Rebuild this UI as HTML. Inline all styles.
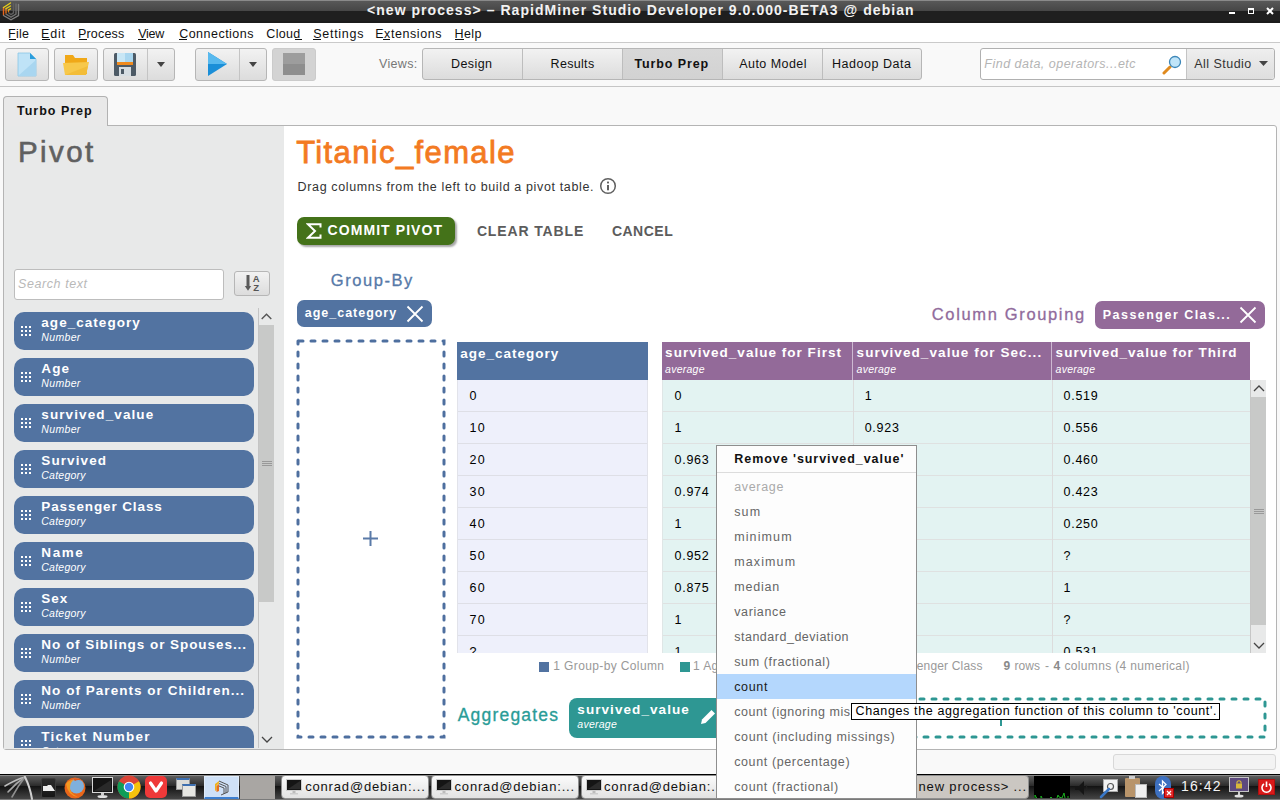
<!DOCTYPE html>
<html><head><meta charset="utf-8"><title>RapidMiner Turbo Prep</title>
<style>
*{margin:0;padding:0;box-sizing:border-box}
html,body{width:1280px;height:800px;overflow:hidden}
body{position:relative;background:#f9f9f9;font-family:"Liberation Sans",sans-serif;font-size:12px;color:#000}
.a{position:absolute}
.x{position:absolute;white-space:pre}
.clip{position:absolute;overflow:hidden}
#tb{left:0;top:0;width:1280px;height:23px;background:linear-gradient(#8a8a8a 0,#8a8a8a 1px,#585858 1px,#464646 11px,#1f1f1f 11px,#1f1f1f 21px,#1b1b1b 21px)}
#menu{left:0;top:23px;width:1280px;height:20px;background:#fff;border-bottom:1px solid #cacaca}
.ul{position:absolute;height:1px;background:#111;top:39px}
#tline{left:0;top:86px;width:1280px;height:1px;background:#c6c6c6}
.btn{position:absolute;border:1px solid #b6b6b6;border-radius:3px;background:linear-gradient(#f2f2f2,#dcdcdc)}
.vsep{position:absolute;width:1px;background:#c4c4c4}
#views{left:422px;top:48px;width:500px;height:32px}
#tab{left:3px;top:96px;width:105px;height:31px;background:#e9e9e9;border:1px solid #b2b2b2;border-bottom:none;border-radius:4px 4px 0 0}
#panel{left:3px;top:125px;width:1274px;height:625px;border:1px solid #b4b4b4;background:#fff;border-radius:0 3px 3px 3px}
#lp{left:4px;top:126px;width:280px;height:623px;background:#e8e9e9}
.card{position:absolute;left:14px;width:240px;height:38px;border-radius:10px;background:#5273a1}
.dots{position:absolute;left:7px;top:14px;width:10px;height:10px}
.chip{position:absolute;border-radius:7px}
.thumb{position:absolute;background:#c8c9c8}
.tr{position:absolute;height:1px}

</style></head><body>
<!-- title bar -->
<div id="tb" class="a">
 <svg class="a" style="left:0;top:0" width="24" height="23" viewBox="0 0 24 23">
  <g fill="none" stroke-width="1.4" stroke-linecap="round">
   <path d="M3.5,15.5 L11,19.8 L18.5,15.5 L18.5,4.5" stroke="#808080"/>
   <path d="M6,14.2 L11,17.2 L16,14.2 L16,4" stroke="#6e6e6e"/>
   <path d="M8.5,12.8 L11,14.6 L13.5,12.8 L13.5,3.5" stroke="#5e5e5e"/>
   <path d="M3.5,14.5 L3.5,7.5" stroke="#e8641a"/>
   <path d="M6,13 L6,8.7" stroke="#e0701c"/>
   <path d="M8.5,11.5 L8.5,10" stroke="#e07a1c"/>
   <path d="M3.5,7.5 L10.5,3" stroke="#e6cf1a"/>
   <path d="M6,8.7 L10.5,6" stroke="#e0c818"/>
   <path d="M8.5,10 L10.5,8.8" stroke="#d8c018"/>
  </g>
 </svg>
 <div class="a" style="left:1229px;top:12px;width:6px;height:2px;background:#fff"></div>
 <div class="a" style="left:1248px;top:8px;width:6px;height:6px;border:1px solid #fff;border-top-width:2px"></div>
 <svg class="a" style="left:1266px;top:7px" width="8" height="8"><path d="M1,1 L7,7 M7,1 L1,7" stroke="#fff" stroke-width="2"/></svg>
</div>
<!-- menu -->
<div id="menu" class="a"></div>
<div class="ul" style="left:9px;width:7px"></div>
<div class="ul" style="left:42px;width:8px"></div>
<div class="ul" style="left:79px;width:8px"></div>
<div class="ul" style="left:138px;width:8px"></div>
<div class="ul" style="left:179px;width:8px"></div>
<div class="ul" style="left:295px;width:7px"></div>
<div class="ul" style="left:313px;width:8px"></div>
<div class="ul" style="left:383px;width:7px"></div>
<div class="ul" style="left:455px;width:9px"></div>
<!-- toolbar -->
<div id="tline" class="a"></div>
<div class="btn" style="left:5px;top:48px;width:44px;height:33px"></div>
<svg class="a" style="left:17px;top:52px" width="20" height="25" viewBox="0 0 20 25">
 <path d="M1,1 L13,1 L19,7 L19,24 L1,24 Z" fill="#bfe3f7" stroke="#8cc6e6" stroke-width="0.8"/>
 <path d="M1,24 L19,8 L19,24 Z" fill="#a9d6f0"/>
 <path d="M13,1 L19,7 L13,7 Z" fill="#2b9ddc"/>
</svg>
<div class="btn" style="left:54px;top:48px;width:44px;height:33px"></div>
<svg class="a" style="left:63px;top:54px" width="26" height="22" viewBox="0 0 26 22">
 <path d="M2,1 L10,1 L12,4 L24,4 L24,20 L2,20 Z" fill="#f0a818"/>
 <path d="M0,9 L26,8 L23,21 L2,21 Z" fill="#f7c84a"/>
 <path d="M2,21 L25,12 L23,21 Z" fill="#f3bd38"/>
</svg>
<div class="btn" style="left:103px;top:48px;width:72px;height:33px"></div>
<div class="vsep" style="left:147px;top:49px;height:31px"></div>
<svg class="a" style="left:114px;top:53px" width="22" height="23" viewBox="0 0 22 23">
 <rect x="0" y="0" width="22" height="23" rx="1.5" fill="#4d5a66"/>
 <rect x="3" y="0" width="16" height="9" fill="#c8e6f5"/>
 <rect x="11" y="0" width="8" height="9" fill="#a9d6ef"/>
 <rect x="3" y="9" width="16" height="3" fill="#ef8a1e"/>
 <rect x="5" y="14" width="12" height="9" fill="#d6dde2"/>
 <rect x="7" y="16" width="3" height="5" fill="#4d5a66"/>
</svg>
<svg class="a" style="left:157px;top:62px" width="8" height="5"><path d="M0,0 L8,0 L4,5 Z" fill="#444"/></svg>
<div class="btn" style="left:195px;top:48px;width:72px;height:33px"></div>
<div class="vsep" style="left:239px;top:49px;height:31px"></div>
<svg class="a" style="left:207px;top:52px" width="21" height="24" viewBox="0 0 21 24">
 <path d="M1,0 L20,12 L1,24 Z" fill="#1b8fd8"/>
 <path d="M1,0 L20,12 L1,12 Z" fill="#58b9ee"/>
</svg>
<svg class="a" style="left:249px;top:62px" width="8" height="5"><path d="M0,0 L8,0 L4,5 Z" fill="#444"/></svg>
<div class="a" style="left:272px;top:48px;width:44px;height:33px;border-radius:3px;background:#d3d3d3;border:1px solid #cbcbcb"></div>
<div class="a" style="left:283px;top:53px;width:22px;height:22px;background:linear-gradient(#9d9d9d 50%,#8e8e8e 50%)"></div>
<!-- views -->
<div class="btn" id="views"></div>
<div class="a" style="left:622px;top:49px;width:100px;height:30px;background:linear-gradient(#d8d8d8,#d2d2d2)"></div>
<div class="vsep" style="left:522px;top:49px;height:30px;background:#bdbdbd"></div>
<div class="vsep" style="left:622px;top:49px;height:30px;background:#bdbdbd"></div>
<div class="vsep" style="left:722px;top:49px;height:30px;background:#bdbdbd"></div>
<div class="vsep" style="left:822px;top:49px;height:30px;background:#bdbdbd"></div>
<!-- search -->
<div class="a" style="left:980px;top:48px;width:295px;height:32px;border:1px solid #b0b0b0;border-radius:3px;background:#fff"></div>
<div class="a" style="left:1186px;top:49px;width:88px;height:30px;background:linear-gradient(#eeeeee,#dedede);border-left:1px solid #c4c4c4;border-radius:0 3px 3px 0"></div>
<svg class="a" style="left:1162px;top:55px" width="20" height="20" viewBox="0 0 20 20">
 <path d="M2,18 L8,12" stroke="#e08a1e" stroke-width="3" stroke-linecap="round"/>
 <circle cx="13" cy="7" r="5.5" fill="#bfe4f8" stroke="#3d87b8" stroke-width="1.3"/>
</svg>
<svg class="a" style="left:1259px;top:61px" width="9" height="5"><path d="M0,0 L9,0 L4.5,5 Z" fill="#444"/></svg>
<!-- tab & panel -->
<div id="panel" class="a"></div>
<div id="tab" class="a"></div>
<div id="lp" class="a"></div>
<!-- left panel -->
<div class="a" style="left:14px;top:269px;width:210px;height:31px;border:1px solid #bdbdbd;border-radius:3px;background:#fff"></div>
<div class="btn" style="left:234px;top:271px;width:36px;height:25px"></div>
<svg class="a" style="left:243px;top:274px" width="18" height="19" viewBox="0 0 18 19">
 <path d="M5,1 L5,13" stroke="#5a5a5a" stroke-width="3"/>
 <path d="M1.8,12 L8.2,12 L5,16.8 Z" fill="#5a5a5a"/>
 <text x="13.2" y="8.3" font-family="Liberation Sans" font-weight="bold" font-size="9.5" text-anchor="middle" fill="#555">A</text>
 <text x="13.2" y="16.6" font-family="Liberation Sans" font-weight="bold" font-size="9.5" text-anchor="middle" fill="#555">Z</text>
</svg>
<div class="clip" style="left:0;top:305px;width:258px;height:443px">
 <div class="card" style="top:7px"><svg class="dots" width="10" height="10"><rect x="0" y="0" width="2" height="2" fill="#fff"/><rect x="0" y="4" width="2" height="2" fill="#fff"/><rect x="0" y="8" width="2" height="2" fill="#fff"/><rect x="4" y="0" width="2" height="2" fill="#fff"/><rect x="4" y="4" width="2" height="2" fill="#fff"/><rect x="4" y="8" width="2" height="2" fill="#fff"/><rect x="8" y="0" width="2" height="2" fill="#fff"/><rect x="8" y="4" width="2" height="2" fill="#fff"/><rect x="8" y="8" width="2" height="2" fill="#fff"/></svg></div><div class="card" style="top:53px"><svg class="dots" width="10" height="10"><rect x="0" y="0" width="2" height="2" fill="#fff"/><rect x="0" y="4" width="2" height="2" fill="#fff"/><rect x="0" y="8" width="2" height="2" fill="#fff"/><rect x="4" y="0" width="2" height="2" fill="#fff"/><rect x="4" y="4" width="2" height="2" fill="#fff"/><rect x="4" y="8" width="2" height="2" fill="#fff"/><rect x="8" y="0" width="2" height="2" fill="#fff"/><rect x="8" y="4" width="2" height="2" fill="#fff"/><rect x="8" y="8" width="2" height="2" fill="#fff"/></svg></div><div class="card" style="top:99px"><svg class="dots" width="10" height="10"><rect x="0" y="0" width="2" height="2" fill="#fff"/><rect x="0" y="4" width="2" height="2" fill="#fff"/><rect x="0" y="8" width="2" height="2" fill="#fff"/><rect x="4" y="0" width="2" height="2" fill="#fff"/><rect x="4" y="4" width="2" height="2" fill="#fff"/><rect x="4" y="8" width="2" height="2" fill="#fff"/><rect x="8" y="0" width="2" height="2" fill="#fff"/><rect x="8" y="4" width="2" height="2" fill="#fff"/><rect x="8" y="8" width="2" height="2" fill="#fff"/></svg></div><div class="card" style="top:145px"><svg class="dots" width="10" height="10"><rect x="0" y="0" width="2" height="2" fill="#fff"/><rect x="0" y="4" width="2" height="2" fill="#fff"/><rect x="0" y="8" width="2" height="2" fill="#fff"/><rect x="4" y="0" width="2" height="2" fill="#fff"/><rect x="4" y="4" width="2" height="2" fill="#fff"/><rect x="4" y="8" width="2" height="2" fill="#fff"/><rect x="8" y="0" width="2" height="2" fill="#fff"/><rect x="8" y="4" width="2" height="2" fill="#fff"/><rect x="8" y="8" width="2" height="2" fill="#fff"/></svg></div><div class="card" style="top:191px"><svg class="dots" width="10" height="10"><rect x="0" y="0" width="2" height="2" fill="#fff"/><rect x="0" y="4" width="2" height="2" fill="#fff"/><rect x="0" y="8" width="2" height="2" fill="#fff"/><rect x="4" y="0" width="2" height="2" fill="#fff"/><rect x="4" y="4" width="2" height="2" fill="#fff"/><rect x="4" y="8" width="2" height="2" fill="#fff"/><rect x="8" y="0" width="2" height="2" fill="#fff"/><rect x="8" y="4" width="2" height="2" fill="#fff"/><rect x="8" y="8" width="2" height="2" fill="#fff"/></svg></div><div class="card" style="top:237px"><svg class="dots" width="10" height="10"><rect x="0" y="0" width="2" height="2" fill="#fff"/><rect x="0" y="4" width="2" height="2" fill="#fff"/><rect x="0" y="8" width="2" height="2" fill="#fff"/><rect x="4" y="0" width="2" height="2" fill="#fff"/><rect x="4" y="4" width="2" height="2" fill="#fff"/><rect x="4" y="8" width="2" height="2" fill="#fff"/><rect x="8" y="0" width="2" height="2" fill="#fff"/><rect x="8" y="4" width="2" height="2" fill="#fff"/><rect x="8" y="8" width="2" height="2" fill="#fff"/></svg></div><div class="card" style="top:283px"><svg class="dots" width="10" height="10"><rect x="0" y="0" width="2" height="2" fill="#fff"/><rect x="0" y="4" width="2" height="2" fill="#fff"/><rect x="0" y="8" width="2" height="2" fill="#fff"/><rect x="4" y="0" width="2" height="2" fill="#fff"/><rect x="4" y="4" width="2" height="2" fill="#fff"/><rect x="4" y="8" width="2" height="2" fill="#fff"/><rect x="8" y="0" width="2" height="2" fill="#fff"/><rect x="8" y="4" width="2" height="2" fill="#fff"/><rect x="8" y="8" width="2" height="2" fill="#fff"/></svg></div><div class="card" style="top:329px"><svg class="dots" width="10" height="10"><rect x="0" y="0" width="2" height="2" fill="#fff"/><rect x="0" y="4" width="2" height="2" fill="#fff"/><rect x="0" y="8" width="2" height="2" fill="#fff"/><rect x="4" y="0" width="2" height="2" fill="#fff"/><rect x="4" y="4" width="2" height="2" fill="#fff"/><rect x="4" y="8" width="2" height="2" fill="#fff"/><rect x="8" y="0" width="2" height="2" fill="#fff"/><rect x="8" y="4" width="2" height="2" fill="#fff"/><rect x="8" y="8" width="2" height="2" fill="#fff"/></svg></div><div class="card" style="top:375px"><svg class="dots" width="10" height="10"><rect x="0" y="0" width="2" height="2" fill="#fff"/><rect x="0" y="4" width="2" height="2" fill="#fff"/><rect x="0" y="8" width="2" height="2" fill="#fff"/><rect x="4" y="0" width="2" height="2" fill="#fff"/><rect x="4" y="4" width="2" height="2" fill="#fff"/><rect x="4" y="8" width="2" height="2" fill="#fff"/><rect x="8" y="0" width="2" height="2" fill="#fff"/><rect x="8" y="4" width="2" height="2" fill="#fff"/><rect x="8" y="8" width="2" height="2" fill="#fff"/></svg></div><div class="card" style="top:421px"><svg class="dots" width="10" height="10"><rect x="0" y="0" width="2" height="2" fill="#fff"/><rect x="0" y="4" width="2" height="2" fill="#fff"/><rect x="0" y="8" width="2" height="2" fill="#fff"/><rect x="4" y="0" width="2" height="2" fill="#fff"/><rect x="4" y="4" width="2" height="2" fill="#fff"/><rect x="4" y="8" width="2" height="2" fill="#fff"/><rect x="8" y="0" width="2" height="2" fill="#fff"/><rect x="8" y="4" width="2" height="2" fill="#fff"/><rect x="8" y="8" width="2" height="2" fill="#fff"/></svg></div>
 <div class="x" style="left:41.30px;top:11.00px;font-size:13.5px;line-height:13.5px;color:#fff;font-weight:bold;letter-spacing:1.042px;">age_category</div>
<div class="x" style="left:41.30px;top:27.00px;font-size:10.5px;line-height:10.5px;color:#fff;font-style:italic;letter-spacing:0.330px;">Number</div>
<div class="x" style="left:41.30px;top:57.00px;font-size:13.5px;line-height:13.5px;color:#fff;font-weight:bold;letter-spacing:1.127px;">Age</div>
<div class="x" style="left:41.30px;top:73.00px;font-size:10.5px;line-height:10.5px;color:#fff;font-style:italic;letter-spacing:0.330px;">Number</div>
<div class="x" style="left:41.30px;top:103.00px;font-size:13.5px;line-height:13.5px;color:#fff;font-weight:bold;letter-spacing:1.104px;">survived_value</div>
<div class="x" style="left:41.30px;top:119.00px;font-size:10.5px;line-height:10.5px;color:#fff;font-style:italic;letter-spacing:0.330px;">Number</div>
<div class="x" style="left:41.30px;top:149.00px;font-size:13.5px;line-height:13.5px;color:#fff;font-weight:bold;letter-spacing:1.103px;">Survived</div>
<div class="x" style="left:41.30px;top:165.00px;font-size:10.5px;line-height:10.5px;color:#fff;font-style:italic;letter-spacing:0.235px;">Category</div>
<div class="x" style="left:41.30px;top:195.00px;font-size:13.5px;line-height:13.5px;color:#fff;font-weight:bold;letter-spacing:0.889px;">Passenger Class</div>
<div class="x" style="left:41.30px;top:211.00px;font-size:10.5px;line-height:10.5px;color:#fff;font-style:italic;letter-spacing:0.235px;">Category</div>
<div class="x" style="left:41.30px;top:241.00px;font-size:13.5px;line-height:13.5px;color:#fff;font-weight:bold;letter-spacing:1.580px;">Name</div>
<div class="x" style="left:41.30px;top:257.00px;font-size:10.5px;line-height:10.5px;color:#fff;font-style:italic;letter-spacing:0.235px;">Category</div>
<div class="x" style="left:41.30px;top:287.00px;font-size:13.5px;line-height:13.5px;color:#fff;font-weight:bold;letter-spacing:0.994px;">Sex</div>
<div class="x" style="left:41.30px;top:303.00px;font-size:10.5px;line-height:10.5px;color:#fff;font-style:italic;letter-spacing:0.235px;">Category</div>
<div class="x" style="left:41.30px;top:333.00px;font-size:13.5px;line-height:13.5px;color:#fff;font-weight:bold;letter-spacing:0.944px;">No of Siblings or Spouses...</div>
<div class="x" style="left:41.30px;top:349.00px;font-size:10.5px;line-height:10.5px;color:#fff;font-style:italic;letter-spacing:0.330px;">Number</div>
<div class="x" style="left:41.30px;top:379.00px;font-size:13.5px;line-height:13.5px;color:#fff;font-weight:bold;letter-spacing:1.036px;">No of Parents or Children...</div>
<div class="x" style="left:41.30px;top:395.00px;font-size:10.5px;line-height:10.5px;color:#fff;font-style:italic;letter-spacing:0.330px;">Number</div>
<div class="x" style="left:41.30px;top:425.00px;font-size:13.5px;line-height:13.5px;color:#fff;font-weight:bold;letter-spacing:1.227px;">Ticket Number</div>
<div class="x" style="left:41.30px;top:441.00px;font-size:10.5px;line-height:10.5px;color:#fff;font-style:italic;letter-spacing:0.235px;">Category</div>
</div>
<div class="a" style="left:258px;top:308px;width:1px;height:440px;background:#c4c4c4"></div>
<svg class="a" style="left:260px;top:312px" width="14" height="9"><path d="M1.7,7 L6.5,2.2 L11.3,7" stroke="#555" stroke-width="1.4" fill="none"/></svg>
<div class="thumb" style="left:259px;top:325px;width:15px;height:277px"></div>
<div class="a" style="left:262px;top:461px;width:10px;height:5px;border-top:1px solid #999;border-bottom:1px solid #999"></div>
<div class="a" style="left:262px;top:463px;width:10px;height:1px;background:#999"></div>
<svg class="a" style="left:260px;top:735px" width="14" height="9"><path d="M2,2 L7,7 L12,2" stroke="#444" stroke-width="1.3" fill="none"/></svg>
<!-- right content -->
<svg class="a" style="left:599px;top:177px" width="18" height="18" viewBox="0 0 18 18">
 <circle cx="9" cy="9" r="7.3" fill="none" stroke="#606060" stroke-width="1.5"/>
 <rect x="8" y="8" width="2" height="5.3" fill="#606060"/><rect x="8" y="4.6" width="2" height="1.8" fill="#606060"/>
</svg>
<div class="a" style="left:297px;top:217px;width:158px;height:28px;border-radius:7px;background:#447219;box-shadow:2px 2px 2px rgba(0,0,0,0.35)"></div>
<svg class="a" style="left:306px;top:222px" width="16" height="18" viewBox="0 0 16 18">
 <path d="M14.5,5.5 L14.5,2.2 L2,2.2 L9,9 L2,15.8 L14.5,15.8 L14.5,12.5" stroke="#fff" stroke-width="2" fill="none" stroke-linejoin="miter"/>
</svg>
<div class="chip" style="left:297px;top:300px;width:135px;height:27px;background:#5273a1"></div>
<svg class="a" style="left:406px;top:305px" width="18" height="18"><path d="M1.5,1.5 L16.5,16.5 M16.5,1.5 L1.5,16.5" stroke="#fff" stroke-width="1.8"/></svg>
<div class="chip" style="left:1095px;top:301px;width:170px;height:28px;background:#936a99"></div>
<svg class="a" style="left:1239px;top:306px" width="18" height="18"><path d="M1.5,1.5 L16.5,16.5 M16.5,1.5 L1.5,16.5" stroke="#fff" stroke-width="1.8"/></svg>
<svg class="a" style="left:296px;top:339px" width="151" height="401">
 <rect x="2" y="2" width="146" height="396" fill="none" stroke="#4e6f9f" stroke-width="3" stroke-dasharray="4 8" stroke-dashoffset="-1" stroke-linecap="round"/>
 <path d="M74.5,192 L74.5,207 M67,199.5 L82,199.5" stroke="#5a7aa8" stroke-width="2"/>
</svg>
<!-- table 1 -->
<div class="a" style="left:457px;top:342px;width:191px;height:38px;background:#5273a1"></div>
<div class="clip" style="left:457px;top:380px;width:191px;height:273px;background:#eef0fb;border-left:1px solid #e2e3ea;border-right:1px solid #e2e3ea">
 <div class="tr" style="left:0;top:31px;width:191px;background:#dedfe6"></div><div class="tr" style="left:0;top:63px;width:191px;background:#dedfe6"></div><div class="tr" style="left:0;top:95px;width:191px;background:#dedfe6"></div><div class="tr" style="left:0;top:127px;width:191px;background:#dedfe6"></div><div class="tr" style="left:0;top:159px;width:191px;background:#dedfe6"></div><div class="tr" style="left:0;top:191px;width:191px;background:#dedfe6"></div><div class="tr" style="left:0;top:223px;width:191px;background:#dedfe6"></div><div class="tr" style="left:0;top:255px;width:191px;background:#dedfe6"></div>
 <div class="x" style="left:11.40px;top:10.00px;font-size:12.5px;line-height:12.5px;color:#000;">0</div>
<div class="x" style="left:11.40px;top:42.00px;font-size:12.5px;line-height:12.5px;color:#000;letter-spacing:1.298px;">10</div>
<div class="x" style="left:11.40px;top:74.00px;font-size:12.5px;line-height:12.5px;color:#000;letter-spacing:1.298px;">20</div>
<div class="x" style="left:11.40px;top:106.00px;font-size:12.5px;line-height:12.5px;color:#000;letter-spacing:1.298px;">30</div>
<div class="x" style="left:11.40px;top:138.00px;font-size:12.5px;line-height:12.5px;color:#000;letter-spacing:1.298px;">40</div>
<div class="x" style="left:11.40px;top:170.00px;font-size:12.5px;line-height:12.5px;color:#000;letter-spacing:1.298px;">50</div>
<div class="x" style="left:11.40px;top:202.00px;font-size:12.5px;line-height:12.5px;color:#000;letter-spacing:1.298px;">60</div>
<div class="x" style="left:11.40px;top:234.00px;font-size:12.5px;line-height:12.5px;color:#000;letter-spacing:1.298px;">70</div>
<div class="x" style="left:11.40px;top:266.00px;font-size:12.5px;line-height:12.5px;color:#000;">?</div>
</div>
<!-- table 2 -->
<div class="a" style="left:662px;top:342px;width:588px;height:38px;background:#936a99"></div>
<div class="a" style="left:852px;top:342px;width:1px;height:38px;background:#cdb9d2"></div>
<div class="a" style="left:1051px;top:342px;width:1px;height:38px;background:#cdb9d2"></div>
<div class="clip" style="left:662px;top:380px;width:589px;height:273px;background:#e3f3f2;border-left:1px solid #dfe6e6">
 <div class="tr" style="left:0;top:31px;width:589px;background:#dfe1e1"></div><div class="tr" style="left:0;top:63px;width:589px;background:#dfe1e1"></div><div class="tr" style="left:0;top:95px;width:589px;background:#dfe1e1"></div><div class="tr" style="left:0;top:127px;width:589px;background:#dfe1e1"></div><div class="tr" style="left:0;top:159px;width:589px;background:#dfe1e1"></div><div class="tr" style="left:0;top:191px;width:589px;background:#dfe1e1"></div><div class="tr" style="left:0;top:223px;width:589px;background:#dfe1e1"></div><div class="tr" style="left:0;top:255px;width:589px;background:#dfe1e1"></div>
 <div class="a" style="left:190px;top:0;width:1px;height:273px;background:#dcdcdc"></div>
 <div class="a" style="left:389px;top:0;width:1px;height:273px;background:#dcdcdc"></div>
 <div class="x" style="left:11.50px;top:10.00px;font-size:12.5px;line-height:12.5px;color:#000;">0</div>
<div class="x" style="left:201.70px;top:10.00px;font-size:12.5px;line-height:12.5px;color:#000;">1</div>
<div class="x" style="left:400.50px;top:10.00px;font-size:12.5px;line-height:12.5px;color:#000;letter-spacing:0.730px;">0.519</div>
<div class="x" style="left:11.50px;top:42.00px;font-size:12.5px;line-height:12.5px;color:#000;">1</div>
<div class="x" style="left:201.70px;top:42.00px;font-size:12.5px;line-height:12.5px;color:#000;letter-spacing:0.730px;">0.923</div>
<div class="x" style="left:400.50px;top:42.00px;font-size:12.5px;line-height:12.5px;color:#000;letter-spacing:0.730px;">0.556</div>
<div class="x" style="left:11.50px;top:74.00px;font-size:12.5px;line-height:12.5px;color:#000;letter-spacing:0.730px;">0.963</div>
<div class="x" style="left:201.70px;top:74.00px;font-size:12.5px;line-height:12.5px;color:#000;letter-spacing:0.730px;">0.846</div>
<div class="x" style="left:400.50px;top:74.00px;font-size:12.5px;line-height:12.5px;color:#000;letter-spacing:0.730px;">0.460</div>
<div class="x" style="left:11.50px;top:106.00px;font-size:12.5px;line-height:12.5px;color:#000;letter-spacing:0.730px;">0.974</div>
<div class="x" style="left:201.70px;top:106.00px;font-size:12.5px;line-height:12.5px;color:#000;letter-spacing:0.730px;">0.877</div>
<div class="x" style="left:400.50px;top:106.00px;font-size:12.5px;line-height:12.5px;color:#000;letter-spacing:0.730px;">0.423</div>
<div class="x" style="left:11.50px;top:138.00px;font-size:12.5px;line-height:12.5px;color:#000;">1</div>
<div class="x" style="left:201.70px;top:138.00px;font-size:12.5px;line-height:12.5px;color:#000;letter-spacing:0.730px;">0.900</div>
<div class="x" style="left:400.50px;top:138.00px;font-size:12.5px;line-height:12.5px;color:#000;letter-spacing:0.730px;">0.250</div>
<div class="x" style="left:11.50px;top:170.00px;font-size:12.5px;line-height:12.5px;color:#000;letter-spacing:0.730px;">0.952</div>
<div class="x" style="left:201.70px;top:170.00px;font-size:12.5px;line-height:12.5px;color:#000;">1</div>
<div class="x" style="left:400.50px;top:170.00px;font-size:12.5px;line-height:12.5px;color:#000;">?</div>
<div class="x" style="left:11.50px;top:202.00px;font-size:12.5px;line-height:12.5px;color:#000;letter-spacing:0.730px;">0.875</div>
<div class="x" style="left:201.70px;top:202.00px;font-size:12.5px;line-height:12.5px;color:#000;">1</div>
<div class="x" style="left:400.50px;top:202.00px;font-size:12.5px;line-height:12.5px;color:#000;">1</div>
<div class="x" style="left:11.50px;top:234.00px;font-size:12.5px;line-height:12.5px;color:#000;">1</div>
<div class="x" style="left:201.70px;top:234.00px;font-size:12.5px;line-height:12.5px;color:#000;">?</div>
<div class="x" style="left:400.50px;top:234.00px;font-size:12.5px;line-height:12.5px;color:#000;">?</div>
<div class="x" style="left:11.50px;top:266.00px;font-size:12.5px;line-height:12.5px;color:#000;">1</div>
<div class="x" style="left:201.70px;top:266.00px;font-size:12.5px;line-height:12.5px;color:#000;">1</div>
<div class="x" style="left:400.50px;top:266.00px;font-size:12.5px;line-height:12.5px;color:#000;letter-spacing:0.730px;">0.531</div>
</div>
<div class="a" style="left:1250px;top:380px;width:16px;height:273px;background:#e8e9e9;border-left:1px solid #c6c6c6"></div>
<svg class="a" style="left:1252px;top:384px" width="14" height="9"><path d="M2,7 L7,2 L12,7" stroke="#444" stroke-width="1.3" fill="none"/></svg>
<div class="thumb" style="left:1251px;top:397px;width:15px;height:228px"></div>
<div class="a" style="left:1254px;top:509px;width:10px;height:5px;border-top:1px solid #999;border-bottom:1px solid #999"></div>
<div class="a" style="left:1254px;top:511px;width:10px;height:1px;background:#999"></div>
<svg class="a" style="left:1252px;top:641px" width="14" height="9"><path d="M2,2 L7,7 L12,2" stroke="#444" stroke-width="1.3" fill="none"/></svg>
<!-- legend -->
<div class="a" style="left:539px;top:662px;width:10px;height:10px;background:#5273a1"></div>
<div class="a" style="left:680px;top:662px;width:10px;height:10px;background:#2e9793"></div>
<!-- aggregates -->
<svg class="a" style="left:726px;top:697px" width="541" height="42">
 <rect x="2" y="2" width="537" height="38" fill="none" stroke="#2e9793" stroke-width="3" stroke-dasharray="4 8" stroke-linecap="round"/>
 <path d="M275,14 L275,29 M267.5,21.5 L282.5,21.5" stroke="#2e9793" stroke-width="2"/>
</svg>
<div class="chip" style="left:569px;top:698px;width:175px;height:40px;border-radius:8px;background:#2e9793"></div>
<svg class="a" style="left:698px;top:707px" width="20" height="20" viewBox="0 0 20 20">
 <path d="M3,17 L4,12.5 L13.5,3 L17,6.5 L7.5,16 Z" fill="#fff"/>
</svg>
<!-- status bar -->
<div class="a" style="left:1113px;top:754px;width:163px;height:16px;border:1px solid #d8d8d8;border-radius:3px;background:#f3f3f3"></div>
<!-- base texts -->
<div class="x" style="left:367.00px;top:3.20px;font-size:14.0px;line-height:14.0px;color:#f2f2f2;font-weight:bold;letter-spacing:1.045px;">&lt;new process&gt; – RapidMiner Studio Developer 9.0.000-BETA3 @ debian</div>
<div class="x" style="left:8.00px;top:28.00px;font-size:12.5px;line-height:12.5px;color:#111;letter-spacing:0.270px;">File</div>
<div class="x" style="left:41.00px;top:28.00px;font-size:12.5px;line-height:12.5px;color:#111;letter-spacing:0.811px;">Edit</div>
<div class="x" style="left:78.00px;top:28.00px;font-size:12.5px;line-height:12.5px;color:#111;letter-spacing:0.183px;">Process</div>
<div class="x" style="left:138.20px;top:28.00px;font-size:12.5px;line-height:12.5px;color:#111;letter-spacing:-0.280px;">View</div>
<div class="x" style="left:179.20px;top:28.00px;font-size:12.5px;line-height:12.5px;color:#111;letter-spacing:0.476px;">Connections</div>
<div class="x" style="left:266.30px;top:28.00px;font-size:12.5px;line-height:12.5px;color:#111;letter-spacing:0.323px;">Cloud</div>
<div class="x" style="left:313.20px;top:28.00px;font-size:12.5px;line-height:12.5px;color:#111;letter-spacing:0.726px;">Settings</div>
<div class="x" style="left:375.20px;top:28.00px;font-size:12.5px;line-height:12.5px;color:#111;letter-spacing:0.567px;">Extensions</div>
<div class="x" style="left:454.50px;top:28.00px;font-size:12.5px;line-height:12.5px;color:#111;letter-spacing:0.415px;">Help</div>
<div class="x" style="left:379.00px;top:57.80px;font-size:12.5px;line-height:12.5px;color:#777;letter-spacing:0.316px;">Views:</div>
<div class="x" style="left:451.00px;top:58.00px;font-size:12.5px;line-height:12.5px;color:#111;letter-spacing:0.408px;">Design</div>
<div class="x" style="left:550.60px;top:58.00px;font-size:12.5px;line-height:12.5px;color:#111;letter-spacing:0.312px;">Results</div>
<div class="x" style="left:634.40px;top:58.00px;font-size:12.5px;line-height:12.5px;color:#111;font-weight:bold;letter-spacing:0.899px;">Turbo Prep</div>
<div class="x" style="left:739.30px;top:58.00px;font-size:12.5px;line-height:12.5px;color:#111;letter-spacing:0.438px;">Auto Model</div>
<div class="x" style="left:832.00px;top:58.00px;font-size:12.5px;line-height:12.5px;color:#111;letter-spacing:0.529px;">Hadoop Data</div>
<div class="x" style="left:984.30px;top:57.50px;font-size:12.5px;line-height:12.5px;color:#b4b4b4;font-style:italic;letter-spacing:0.491px;">Find data, operators...etc</div>
<div class="x" style="left:1194.30px;top:57.50px;font-size:12.5px;line-height:12.5px;color:#333;letter-spacing:0.460px;">All Studio</div>
<div class="x" style="left:17.00px;top:104.60px;font-size:12.5px;line-height:12.5px;color:#111;font-weight:bold;letter-spacing:0.988px;">Turbo Prep</div>
<div class="x" style="left:18.00px;top:136.50px;font-size:29.5px;line-height:29.5px;color:#606060;letter-spacing:2.403px;-webkit-text-stroke:0.6px #606060;">Pivot</div>
<div class="x" style="left:18.10px;top:277.50px;font-size:12.5px;line-height:12.5px;color:#b9b9b9;font-style:italic;letter-spacing:0.565px;">Search text</div>
<div class="x" style="left:296.20px;top:136.80px;font-size:31.0px;line-height:31.0px;color:#f37a22;letter-spacing:1.369px;-webkit-text-stroke:0.8px #f37a22;">Titanic_female</div>
<div class="x" style="left:297.60px;top:181.00px;font-size:12.5px;line-height:12.5px;color:#333;letter-spacing:0.636px;">Drag columns from the left to build a pivot table.</div>
<div class="x" style="left:327.50px;top:223.00px;font-size:14.0px;line-height:14.0px;color:#fff;font-weight:bold;letter-spacing:1.081px;">COMMIT PIVOT</div>
<div class="x" style="left:476.90px;top:224.00px;font-size:14.0px;line-height:14.0px;color:#5c5c5c;font-weight:bold;letter-spacing:0.860px;">CLEAR TABLE</div>
<div class="x" style="left:611.90px;top:224.00px;font-size:14.0px;line-height:14.0px;color:#5c5c5c;font-weight:bold;letter-spacing:0.504px;">CANCEL</div>
<div class="x" style="left:330.80px;top:271.70px;font-size:16.5px;line-height:16.5px;color:#5679a8;letter-spacing:1.549px;-webkit-text-stroke:0.3px #5679a8;">Group-By</div>
<div class="x" style="left:304.80px;top:307.00px;font-size:12.5px;line-height:12.5px;color:#fff;font-weight:bold;letter-spacing:0.978px;">age_category</div>
<div class="x" style="left:931.80px;top:306.30px;font-size:16.5px;line-height:16.5px;color:#916b9c;letter-spacing:1.647px;-webkit-text-stroke:0.3px #916b9c;">Column Grouping</div>
<div class="x" style="left:1102.80px;top:308.90px;font-size:12.5px;line-height:12.5px;color:#fff;font-weight:bold;letter-spacing:1.465px;">Passenger Clas...</div>
<div class="x" style="left:460.30px;top:347.40px;font-size:13.5px;line-height:13.5px;color:#fff;font-weight:bold;letter-spacing:0.988px;">age_category</div>
<div class="x" style="left:665.10px;top:346.30px;font-size:13.5px;line-height:13.5px;color:#fff;font-weight:bold;letter-spacing:1.025px;">survived_value for First</div>
<div class="x" style="left:665.10px;top:363.70px;font-size:10.5px;line-height:10.5px;color:#fff;font-style:italic;letter-spacing:0.249px;">average</div>
<div class="x" style="left:856.60px;top:346.30px;font-size:13.5px;line-height:13.5px;color:#fff;font-weight:bold;letter-spacing:1.093px;">survived_value for Sec...</div>
<div class="x" style="left:856.60px;top:363.70px;font-size:10.5px;line-height:10.5px;color:#fff;font-style:italic;letter-spacing:0.249px;">average</div>
<div class="x" style="left:1055.60px;top:346.30px;font-size:13.5px;line-height:13.5px;color:#fff;font-weight:bold;letter-spacing:1.046px;">survived_value for Third</div>
<div class="x" style="left:1055.60px;top:363.70px;font-size:10.5px;line-height:10.5px;color:#fff;font-style:italic;letter-spacing:0.249px;">average</div>
<div class="x" style="left:553.30px;top:659.70px;font-size:12.0px;line-height:12.0px;color:#999;letter-spacing:0.373px;">1 Group-by Column</div>
<div class="x" style="left:693.00px;top:659.70px;font-size:12.0px;line-height:12.0px;color:#999;letter-spacing:0.418px;">1 Aggregate Column</div>
<div class="x" style="left:808.75px;top:659.70px;font-size:12.0px;line-height:12.0px;color:#999;letter-spacing:0.179px;">3 Columns for Passenger Class</div>
<div class="x" style="left:1003.40px;top:659.70px;font-size:12.0px;line-height:12.0px;color:#8a8a8a;font-weight:bold;">9</div>
<div class="x" style="left:1014.40px;top:659.70px;font-size:12.0px;line-height:12.0px;color:#999;letter-spacing:0.088px;">rows</div>
<div class="x" style="left:1045.00px;top:659.70px;font-size:12.0px;line-height:12.0px;color:#999;">-</div>
<div class="x" style="left:1053.40px;top:659.70px;font-size:12.0px;line-height:12.0px;color:#8a8a8a;font-weight:bold;">4</div>
<div class="x" style="left:1064.40px;top:659.70px;font-size:12.0px;line-height:12.0px;color:#999;letter-spacing:0.348px;">columns (4 numerical)</div>
<div class="x" style="left:457.70px;top:707.40px;font-size:17.5px;line-height:17.5px;color:#2a9c97;letter-spacing:1.205px;-webkit-text-stroke:0.3px #2a9c97;">Aggregates</div>
<div class="x" style="left:577.30px;top:702.80px;font-size:13.5px;line-height:13.5px;color:#fff;font-weight:bold;letter-spacing:1.073px;">survived_value</div>
<div class="x" style="left:577.30px;top:718.50px;font-size:10.5px;line-height:10.5px;color:#fff;font-style:italic;letter-spacing:0.249px;">average</div>
<!-- taskbar -->
<div class="a" style="left:0;top:774px;width:1280px;height:26px;background:linear-gradient(#000 0,#000 1px,#8a8a8a 1px,#8a8a8a 2px,#5e5e5e 2px,#2a2a2a 12px,#121212 12px,#454545 25px,#7a7a7a 25px)">
 <svg class="a" style="left:3px;top:1px" width="30" height="25" viewBox="0 0 30 25">
 <g fill="none" stroke-linecap="round">
 <path d="M2,11 Q14,4 22,2" stroke="#bdbdbd" stroke-width="1.6"/>
 <path d="M5,17 Q13,8 22,2" stroke="#a8a8a8" stroke-width="1.6"/>
 <path d="M9,22 Q15,11 22,2" stroke="#8e8e8e" stroke-width="1.6"/>
 <path d="M22,2 Q27,12 29,24" stroke="#cfcfcf" stroke-width="2"/>
 </g>
</svg>
<div class="a" style="left:41px;top:4px;width:15px;height:20px;border-radius:2px;background:linear-gradient(#2c2c2c,#161616);border:1px solid #3d3d3d"></div>
<svg class="a" style="left:43px;top:11px" width="12" height="7"><path d="M0,1 L4,1 L5,0 L8,0 L12,6 L0,6 Z" fill="#eee"/></svg>
<svg class="a" style="left:64px;top:2px" width="22" height="23" viewBox="0 0 22 23">
 <circle cx="11" cy="12" r="10.5" fill="#e8661a"/>
 <circle cx="12.5" cy="10" r="7.5" fill="#7fb0dc"/>
 <path d="M2,8 Q4,20 14,21 Q6,18 6,12 Q6,6 10,4 Q4,4 2,8 Z" fill="#f29a22"/>
 <path d="M9,3 Q14,1 19,5 Q14,3 11,5 Z" fill="#e0561a"/>
</svg>
<svg class="a" style="left:92px;top:3px" width="21" height="21" viewBox="0 0 21 21">
 <rect x="0.5" y="0.5" width="20" height="15" fill="#151515" stroke="#d8d8d8" stroke-width="1"/>
 <path d="M2,14 L19,3 L19,14 Z" fill="#2a2a2a"/>
 <rect x="9" y="16" width="3" height="2" fill="#cfcfcf"/>
 <ellipse cx="10.5" cy="19.5" rx="5" ry="1.5" fill="#e2e2e2"/>
</svg>
<svg class="a" style="left:117px;top:1px" width="24" height="24" viewBox="0 0 24 24">
 <circle cx="12" cy="12" r="11.5" fill="#db4437"/>
 <path d="M12,12 L22,6.25 A11.5,11.5 0 0 1 12,23.5 Z" fill="#f4c20d"/>
 <path d="M12,12 L12,23.5 A11.5,11.5 0 0 1 2,6.25 Z" fill="#0f9d58"/>
 <circle cx="12" cy="12" r="5.3" fill="#fff"/>
 <circle cx="12" cy="12" r="4.2" fill="#4285f4"/>
</svg>
<div class="a" style="left:145px;top:2px;width:22px;height:22px;border-radius:5px;background:#ef3939"></div>
<svg class="a" style="left:148px;top:6px" width="16" height="14"><path d="M2.5,3 L8,11 L13.5,3" stroke="#fff" stroke-width="3.2" fill="none" stroke-linecap="round" stroke-linejoin="round"/></svg>
<div class="a" style="left:176px;top:4px;width:14px;height:12px;background:#dcdcd8;border:1px solid #9a9a9a;border-top:2px solid #3d6fb0"></div>
<div class="a" style="left:182px;top:10px;width:14px;height:13px;background:#e6e6e2;border:1px solid #9a9a9a;border-top:2px solid #3d6fb0"></div>
<div class="a" style="left:204px;top:2px;width:35px;height:23px;background:#cfe1f7;border:1px solid #e0ecfa;border-bottom:2px solid #3d7fd0"></div>
<svg class="a" style="left:213px;top:5px" width="17" height="17" viewBox="0 0 17 17">
 <g fill="none" stroke="#555" stroke-width="1"><path d="M6,2 L15,6 L15,13 L8,16"/><path d="M6,4.5 L13,7.5 L13,14"/><path d="M6,7 L11,9 L11,15"/></g>
 <path d="M2,5 L6,2 L6,4.5 L3.5,6.5 L3.5,11 L2,12 Z" fill="#f0b41c"/>
 <path d="M3.5,7 L6,5 L6,12 L3.5,13 Z" fill="#e8701a"/>
</svg>
<div class="a" style="left:240px;top:2px;width:35px;height:23px;background:#a9a6a3"></div>
<div class="a" style="left:281px;top:1px;width:148px;height:24px;border:1px solid #8f8f8f;border-radius:4px;background:linear-gradient(#fbfbfb,#e2e2e2)"></div>
<div class="a" style="left:431px;top:1px;width:148px;height:24px;border:1px solid #8f8f8f;border-radius:4px;background:linear-gradient(#fbfbfb,#e2e2e2)"></div>
<div class="a" style="left:581px;top:1px;width:148px;height:24px;border:1px solid #8f8f8f;border-radius:4px;background:linear-gradient(#fbfbfb,#e2e2e2)"></div>
<div class="a" style="left:880px;top:1px;width:149px;height:24px;border:1px solid #8f8f8f;border-radius:4px;background:#cbc7c2"></div>
<svg class="a" style="left:286px;top:5px" width="16" height="16" viewBox="0 0 16 16"><rect x="0.5" y="0.5" width="15" height="11" fill="#151515" stroke="#cfcfcf"/><path d="M2,10 L14,2 L14,10 Z" fill="#2b2b2b"/><rect x="6.5" y="12" width="3" height="2" fill="#bbb"/><rect x="4" y="14" width="8" height="1.5" fill="#ccc"/></svg><svg class="a" style="left:436px;top:5px" width="16" height="16" viewBox="0 0 16 16"><rect x="0.5" y="0.5" width="15" height="11" fill="#151515" stroke="#cfcfcf"/><path d="M2,10 L14,2 L14,10 Z" fill="#2b2b2b"/><rect x="6.5" y="12" width="3" height="2" fill="#bbb"/><rect x="4" y="14" width="8" height="1.5" fill="#ccc"/></svg><svg class="a" style="left:586px;top:5px" width="16" height="16" viewBox="0 0 16 16"><rect x="0.5" y="0.5" width="15" height="11" fill="#151515" stroke="#cfcfcf"/><path d="M2,10 L14,2 L14,10 Z" fill="#2b2b2b"/><rect x="6.5" y="12" width="3" height="2" fill="#bbb"/><rect x="4" y="14" width="8" height="1.5" fill="#ccc"/></svg>
<div class="a" style="left:1034px;top:2px;width:36px;height:22px;background:#000"></div>
<svg class="a" style="left:1034px;top:2px" width="36" height="22"><path d="M1,22 L1,19 L2,21 L3,22 M7,22 L7,20 L8,22 M16,22 L17,21 L18,22 M23,22 L24,19 L25,21 L28,22 L30,17 L31,22 M34,22 L34,20" stroke="#19b01e" stroke-width="1" fill="none"/></svg>
<svg class="a" style="left:1074px;top:6px" width="16" height="16"><path d="M1,6 L5,6 L10,1 L10,15 L5,10 L1,10 Z" fill="#151515"/><path d="M12,5 Q14,8 12,11" stroke="#222" stroke-width="1" fill="none"/></svg>
<div class="a" style="left:1103px;top:5px;width:15px;height:13px;background:#f2f2f2;border:1px solid #aaa"></div>
<svg class="a" style="left:1099px;top:7px" width="18" height="18"><circle cx="11.5" cy="5.5" r="3" fill="none" stroke="#555" stroke-width="1.2"/><path d="M2,16 L10,8" stroke="#3a78c8" stroke-width="2.5" stroke-linecap="round"/></svg>
<div class="a" style="left:1125px;top:4px;width:15px;height:19px;background:#b8946a;border-radius:1px"></div>
<div class="a" style="left:1129px;top:2px;width:6px;height:3px;background:#ccc"></div>
<div class="a" style="left:1135px;top:10px;width:12px;height:14px;background:#f0f0f0;border:1px solid #bbb"></div>
<div class="a" style="left:1155px;top:2px;width:16px;height:23px;border-radius:8px;background:#3d70c0"></div>
<svg class="a" style="left:1157px;top:5px" width="12" height="17"><path d="M2,5 L9,11 L5.5,14.5 L5.5,2 L9,5.5 L2,12" stroke="#fff" stroke-width="1.3" fill="none"/></svg>
<div class="a" style="left:1164px;top:14px;width:10px;height:10px;background:#e02828;border:1px solid #a00"></div>
<svg class="a" style="left:1166px;top:16px" width="6" height="6"><path d="M1,1 L5,5 M5,1 L1,5" stroke="#fff" stroke-width="1.2"/></svg>
<svg class="a" style="left:1229px;top:3px" width="20" height="21" viewBox="0 0 20 21">
 <rect x="0.5" y="0.5" width="19" height="14" fill="#5d4a7e" stroke="#c4c4c4" stroke-width="1"/>
 <rect x="7" y="6.5" width="6" height="5" fill="#d8b83a"/>
 <path d="M8,6.5 L8,5 Q10,2.5 12,5 L12,6.5" stroke="#d8b83a" stroke-width="1.2" fill="none"/>
 <rect x="9" y="15" width="2" height="3" fill="#ccc"/><ellipse cx="10" cy="19" rx="4.5" ry="1.5" fill="#e0e0e0"/>
</svg>
<div class="a" style="left:1258px;top:5px;width:17px;height:16px;background:#d91a1a;border:1px solid #b01010"></div>
<svg class="a" style="left:1260px;top:6px" width="13" height="14"><path d="M4,4 A4.5,4.5 0 1 0 9,4" stroke="#fff" stroke-width="1.6" fill="none"/><path d="M6.5,1.5 L6.5,7" stroke="#fff" stroke-width="1.6"/></svg>

</div>
<div class="x" style="left:305.20px;top:780.00px;font-size:13.0px;line-height:13.0px;color:#111;letter-spacing:0.824px;">conrad@debian:...</div>
<div class="x" style="left:454.50px;top:780.00px;font-size:13.0px;line-height:13.0px;color:#111;letter-spacing:0.824px;">conrad@debian:...</div>
<div class="x" style="left:604.00px;top:780.00px;font-size:13.0px;line-height:13.0px;color:#111;letter-spacing:0.824px;">conrad@debian:...</div>
<div class="x" style="left:918.50px;top:780.00px;font-size:13.0px;line-height:13.0px;color:#111;letter-spacing:0.840px;">new process&gt; ...</div>
<div class="x" style="left:1181.00px;top:778.60px;font-size:14.0px;line-height:14.0px;color:#f4f4f4;letter-spacing:1.113px;">16:42</div>
<!-- popup -->
<div class="a" style="left:716px;top:445px;width:201px;height:354px;background:#fdfdfd;border:1px solid #8e8e8e;z-index:10">
 <div class="a" style="left:0;top:26px;width:199px;height:1px;background:#dcdcdc"></div>
 <div class="a" style="left:0;top:228px;width:199px;height:25px;background:#b4d7fd"></div>
</div>
<div class="a" style="left:0;top:0;z-index:11">
<div class="x" style="left:734.30px;top:452.90px;font-size:12.5px;line-height:12.5px;color:#111;font-weight:bold;letter-spacing:0.940px;">Remove &#x27;survived_value&#x27;</div>
<div class="x" style="left:734.20px;top:480.50px;font-size:12.5px;line-height:12.5px;color:#aaaaaa;letter-spacing:0.672px;">average</div>
<div class="x" style="left:734.20px;top:505.50px;font-size:12.5px;line-height:12.5px;color:#666;letter-spacing:1.149px;">sum</div>
<div class="x" style="left:734.20px;top:530.50px;font-size:12.5px;line-height:12.5px;color:#666;letter-spacing:1.119px;">minimum</div>
<div class="x" style="left:734.20px;top:555.50px;font-size:12.5px;line-height:12.5px;color:#666;letter-spacing:1.124px;">maximum</div>
<div class="x" style="left:734.20px;top:580.50px;font-size:12.5px;line-height:12.5px;color:#666;letter-spacing:0.791px;">median</div>
<div class="x" style="left:734.20px;top:605.50px;font-size:12.5px;line-height:12.5px;color:#666;letter-spacing:0.636px;">variance</div>
<div class="x" style="left:734.20px;top:630.50px;font-size:12.5px;line-height:12.5px;color:#666;letter-spacing:0.513px;">standard_deviation</div>
<div class="x" style="left:734.20px;top:655.50px;font-size:12.5px;line-height:12.5px;color:#666;letter-spacing:0.635px;">sum (fractional)</div>
<div class="x" style="left:734.20px;top:680.50px;font-size:12.5px;line-height:12.5px;color:#1a1a1a;letter-spacing:0.661px;">count</div>
<div class="x" style="left:734.20px;top:705.50px;font-size:12.5px;line-height:12.5px;color:#666;letter-spacing:0.572px;">count (ignoring missings)</div>
<div class="x" style="left:734.20px;top:730.50px;font-size:12.5px;line-height:12.5px;color:#666;letter-spacing:0.662px;">count (including missings)</div>
<div class="x" style="left:734.20px;top:755.50px;font-size:12.5px;line-height:12.5px;color:#666;letter-spacing:0.617px;">count (percentage)</div>
<div class="x" style="left:734.20px;top:780.50px;font-size:12.5px;line-height:12.5px;color:#666;letter-spacing:0.636px;">count (fractional)</div>
</div>
<!-- tooltip -->
<div class="a" style="left:851px;top:703px;width:369px;height:17px;background:#fff;border:1px solid #000;z-index:20"></div>
<div class="a" style="left:0;top:0;z-index:21">
<div class="x" style="left:855.50px;top:705.40px;font-size:12.5px;line-height:12.5px;color:#000;letter-spacing:0.630px;">Changes the aggregation function of this column to &#x27;count&#x27;.</div>
</div>

</body></html>
